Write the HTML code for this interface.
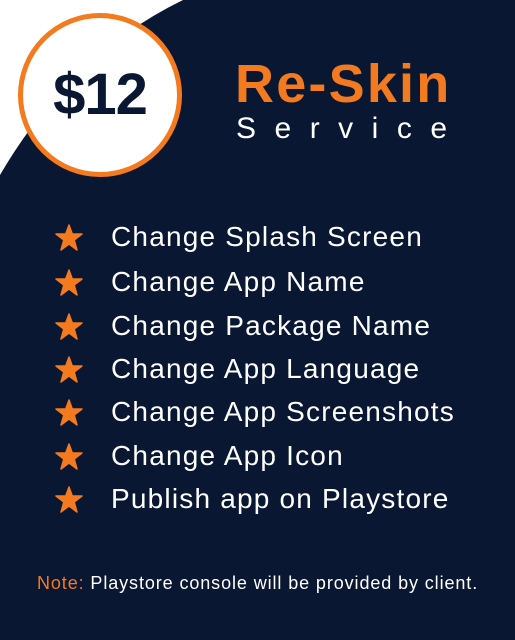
<!DOCTYPE html><html><head><style>
body{margin:0;width:515px;height:640px;background:#0a1733;position:relative;overflow:hidden;font-family:"Liberation Sans",sans-serif}
svg{position:absolute;left:0;top:0}
.price{position:absolute;left:18px;top:13px;width:154px;height:154px;border:5px solid #f47a1f;border-radius:50%;background:#fff;color:#0a1733;font-weight:bold;font-size:58px;text-align:center;line-height:154px;letter-spacing:-1px}
.t1{position:absolute;left:235px;top:54px;color:#f47a1f;font-weight:bold;font-size:54px;line-height:60px;letter-spacing:2.2px}
.t2{position:absolute;left:236px;top:113px;color:#fff;font-size:30px;line-height:32px;letter-spacing:18.5px}
.li{position:absolute;left:111px;color:#fff;font-size:28px;line-height:32px;letter-spacing:1.2px}
.note{position:absolute;left:37px;top:573px;color:#fff;font-size:18px;line-height:20px;letter-spacing:0.9px}
</style></head><body>
<svg width="515" height="640"><path d="M0,0 L183,0 Q70,55 0,175 Z" fill="#fff"/></svg>
<div class="price">$12</div>
<div class="t1">Re-Skin</div>
<div class="t2">Service</div>
<svg width="515" height="640">
<defs><path id="s" d="M15,2 L18.3,11 L28,11 L20.2,17 L23,27 L15,21 L7,27 L9.8,17 L2,11 L11.7,11 Z" fill="#f47a1f" stroke="#f47a1f" stroke-width="1.5" stroke-linejoin="round"/></defs>
<use href="#s" x="54" y="223"/><use href="#s" x="54" y="268"/><use href="#s" x="54" y="312"/><use href="#s" x="54" y="355"/><use href="#s" x="54" y="398"/><use href="#s" x="54" y="442"/><use href="#s" x="54" y="485"/>
</svg>
<div class="li" style="top:221px">Change Splash Screen</div>
<div class="li" style="top:266px">Change App Name</div>
<div class="li" style="top:310px">Change Package Name</div>
<div class="li" style="top:353px">Change App Language</div>
<div class="li" style="top:396px">Change App Screenshots</div>
<div class="li" style="top:440px">Change App Icon</div>
<div class="li" style="top:483px">Publish app on Playstore</div>
<div class="note"><span style="color:#f47a1f">Note:</span> Playstore console will be provided by client.</div>
</body></html>
